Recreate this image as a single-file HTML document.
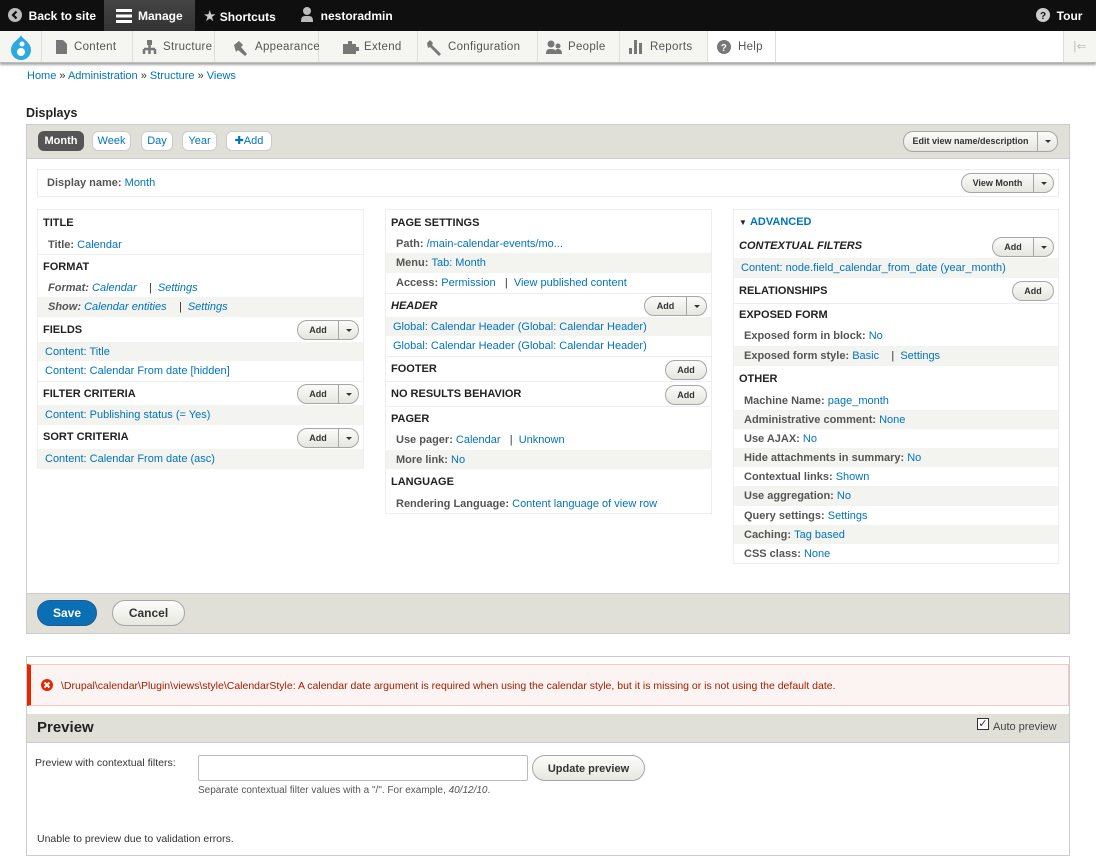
<!DOCTYPE html>
<html><head><meta charset="utf-8"><style>
*{box-sizing:border-box;margin:0;padding:0}
body{width:1096px;height:848px;overflow:hidden;background:#fff;font-family:"Liberation Sans","DejaVu Sans",sans-serif;font-size:11px;color:#333;position:relative}
a,.l{color:#0074bd;text-decoration:none}
.abs{position:absolute}
#top{position:absolute;left:0;top:0;width:1096px;height:31px;background:#0f0f0f;color:#fff;font-weight:bold;font-size:12px}
#top .i{position:absolute;top:1px;height:31px;line-height:31px}
#tray{position:absolute;left:0;top:31px;width:1096px;height:32px;background:#fff;box-shadow:0 2px 2px #aaa;border-bottom:1px solid #bbb}
#tray .t{position:absolute;top:0;height:31px;line-height:33px;background:#f5f5f2;border-right:1px solid #ddd;color:#555;font-size:11.5px;letter-spacing:.3px}
#tray .t svg{position:absolute;top:9px}
.col{position:absolute;border:1px solid #eee;background:#fff}
.r{position:absolute;left:0;right:0;line-height:normal;display:flex;align-items:center;padding-left:10px}
.h{font-weight:bold;color:#222;padding-left:5px;font-size:11px}
.g{background:#f3f3ef}
.sep{border-top:1px solid #eee}
.lb{font-weight:bold;color:#555}
.btn{position:absolute;height:20px;border:1px solid #a6a6a6;border-radius:10px;background:linear-gradient(#fbfbf9,#e6e6e0);font-size:9px;font-weight:bold;color:#333;line-height:18px;text-align:center}
.dd{position:absolute;top:0;bottom:0;right:0;width:20px;border-left:1px solid #a6a6a6}
.dd:after{content:"";position:absolute;left:7px;top:8px;border:3px solid transparent;border-top:3px solid #333}
.tab{position:absolute;top:131px;height:20px;border:1px solid #ccc;border-radius:6px;background:#fff;color:#0074bd;line-height:18px;font-size:11px;text-align:center}
</style></head><body>

<div id="top">
 <div class="i" style="left:8px"><svg width="14" height="14" style="vertical-align:-2px" viewBox="0 0 14 14"><circle cx="7" cy="7" r="7" fill="#bbb"/><path d="M8.5 3.5 5 7l3.5 3.5" stroke="#0f0f0f" stroke-width="2.2" fill="none"/></svg> &nbsp;Back to site</div>
 <div class="i" style="left:104px;width:91px;top:0;background:linear-gradient(#444,#333)"><svg width="16" height="14" style="position:absolute;left:12px;top:9px"><rect y="0" width="16" height="3" fill="#fff"/><rect y="5.5" width="16" height="3" fill="#fff"/><rect y="11" width="16" height="3" fill="#fff"/></svg><span style="position:absolute;left:34px;top:1px">Manage</span></div>
 <div class="i" style="left:203px"><span style="color:#ccc;font-size:15px">★</span> Shortcuts</div>
 <div class="i" style="left:300px"><svg width="14" height="15" style="vertical-align:-2px"><circle cx="7" cy="4" r="4" fill="#bbb"/><path d="M1 15c0-6 2-6 6-6s6 0 6 6z" fill="#bbb"/></svg> &nbsp;nestoradmin</div>
 <div class="i" style="left:1036px"><svg width="14" height="14" style="vertical-align:-2px"><circle cx="7" cy="7" r="7" fill="#ccc"/><text x="7" y="11" font-size="10" text-anchor="middle" fill="#0f0f0f" font-weight="bold" font-family="Liberation Sans">?</text></svg> &nbsp;Tour</div>
</div>

<div id="tray">
 <div class="t" style="left:0;width:42px"><svg width="24" height="26" viewBox="0 0 24 26" style="left:9px;top:3px"><path d="M12 1c1 4 10 7 10 15a10 10 0 0 1-20 0C2 8 11 5 12 1z" fill="#2ba9e0"/><circle cx="12" cy="18" r="4" fill="#fff"/><circle cx="13" cy="10" r="2.5" fill="#fff"/></svg></div>
 <div class="t" style="left:42px;width:91px;padding-left:32px"><svg width="11" height="14" style="left:14px"><path d="M0 0h7l4 4v10H0z" fill="#777"/></svg>Content</div>
 <div class="t" style="left:133px;width:82px;padding-left:30px"><svg width="15" height="14" style="left:9px"><rect x="5" y="0" width="5" height="5" fill="#777"/><path d="M7.5 5v4M2 9h11M2 9v5M7.5 9v5M13 9v5" stroke="#777" stroke-width="2.5" fill="none"/></svg>Structure</div>
 <div class="t" style="left:215px;width:104px;padding-left:40px"><svg width="16" height="16" style="left:17px"><path d="M2 5l5-4 4 4-2 2 6 7-2 2-7-6-2 2z" fill="#777"/></svg>Appearance</div>
 <div class="t" style="left:319px;width:99px;padding-left:45px"><svg width="17" height="14" style="left:24px"><path d="M0 4h5V1h4v3h4v3h3v4h-3v3H0z" fill="#777"/></svg>Extend</div>
 <div class="t" style="left:418px;width:120px;padding-left:30px"><svg width="16" height="16" style="left:8px"><path d="M1 3l3-3 3 3-1 2 9 9-2 2-9-9-2 1z" fill="#777"/></svg>Configuration</div>
 <div class="t" style="left:538px;width:82px;padding-left:30px"><svg width="16" height="14" style="left:8px"><circle cx="5" cy="4" r="3.5" fill="#777"/><path d="M0 14c0-5 2-5 5-5s5 0 5 5z" fill="#777"/><circle cx="12" cy="6" r="2.5" fill="#777"/><path d="M9 14c0-4 1-5 3-5s4 1 4 5z" fill="#777"/></svg>People</div>
 <div class="t" style="left:620px;width:88px;padding-left:30px"><svg width="14" height="14" style="left:9px"><rect x="0" y="8" width="3" height="6" fill="#777"/><rect x="5" y="0" width="3" height="14" fill="#777"/><rect x="10" y="3" width="3" height="11" fill="#777"/></svg>Reports</div>
 <div class="t" style="left:708px;width:68px;padding-left:30px;background:#fff"><svg width="14" height="14" style="left:9px"><circle cx="7" cy="7" r="7" fill="#777"/><text x="7" y="11" font-size="10" text-anchor="middle" fill="#fff" font-weight="bold" font-family="Liberation Sans">?</text></svg>Help</div>
 <div class="t" style="left:1063px;width:33px;border-left:1px solid #ddd;border-right:0;color:#bbb;text-align:center">|⇐</div>
</div>

<div class="abs" style="left:27px;top:70px;font-size:11px"><a>Home</a> » <a>Administration</a> » <a>Structure</a> » <a>Views</a></div>
<div class="abs" style="left:26px;top:106px;font-size:12.5px;font-weight:bold;color:#222">Displays</div>

<div class="abs" style="left:26px;top:124px;width:1044px;height:510px;border:1px solid #ccc;background:#fff">
 <div class="abs" style="left:0;top:0;right:0;height:34px;background:#e0e0d8;border-bottom:1px solid #ccc"></div>
 <div class="abs" style="left:0;bottom:0;right:0;height:40px;background:#e0e0d8;border-top:1px solid #ccc"></div>
</div>
<div class="tab" style="left:38px;width:46px;background:#555;border-color:#555;color:#fff;font-weight:bold">Month</div>
<div class="tab" style="left:92px;width:39px">Week</div>
<div class="tab" style="left:141px;width:32px">Day</div>
<div class="tab" style="left:182px;width:35px">Year</div>
<div class="tab" style="left:226px;width:46px">✚Add</div>
<div class="btn" style="left:903px;top:131px;width:155px;height:21px;padding-right:20px">Edit view name/description<div class="dd"></div></div>

<div class="abs" style="left:37px;top:169px;width:1022px;height:28px;border:1px solid #eee"></div>
<div class="abs" style="left:47px;top:177px"><span class="lb">Display name:</span> <a>Month</a></div>
<div class="btn" style="left:961px;top:173px;width:93px;padding-right:20px">View Month<div class="dd"></div></div>

<div class="col" style="left:37px;top:209px;width:327px;height:260px">
 <div class="r h" style="top:0;height:25px">TITLE</div>
 <div class="r" style="top:25px;height:19px"><span class="lb">Title:</span>&nbsp;<a>Calendar</a></div>
 <div class="r h sep" style="top:44px;height:25px">FORMAT</div>
 <div class="r" style="top:69px;height:18px;font-style:italic"><span class="lb">Format:</span>&nbsp;<a>Calendar</a>&nbsp;&nbsp;&nbsp;&nbsp;|&nbsp;&nbsp;<a>Settings</a></div>
 <div class="r g" style="top:87px;height:20px;font-style:italic"><span class="lb">Show:</span>&nbsp;<a>Calendar entities</a>&nbsp;&nbsp;&nbsp;&nbsp;|&nbsp;&nbsp;<a>Settings</a></div>
 <div class="r h" style="top:107px;height:25px">FIELDS</div>
 <div class="r g" style="top:132px;height:19px;padding-left:7px"><a>Content: Title</a></div>
 <div class="r" style="top:151px;height:20px;padding-left:7px"><a>Content: Calendar From date [hidden]</a></div>
 <div class="r h sep" style="top:171px;height:24px">FILTER CRITERIA</div>
 <div class="r g" style="top:195px;height:20px;padding-left:7px"><a>Content: Publishing status (= Yes)</a></div>
 <div class="r h" style="top:215px;height:24px">SORT CRITERIA</div>
 <div class="r g" style="top:239px;height:20px;padding-left:7px"><a>Content: Calendar From date (asc)</a></div>
</div>
<div class="btn" style="left:297px;top:320px;width:62px;padding-right:20px">Add<div class="dd"></div></div>
<div class="btn" style="left:297px;top:384px;width:62px;padding-right:20px">Add<div class="dd"></div></div>
<div class="btn" style="left:297px;top:428px;width:62px;padding-right:20px">Add<div class="dd"></div></div>

<div class="col" style="left:385px;top:209px;width:327px;height:305px">
 <div class="r h" style="top:0;height:25px">PAGE SETTINGS</div>
 <div class="r" style="top:25px;height:18px"><span class="lb">Path:</span>&nbsp;<a>/main-calendar-events/mo...</a></div>
 <div class="r g" style="top:43px;height:20px"><span class="lb">Menu:</span>&nbsp;<a>Tab: Month</a></div>
 <div class="r" style="top:63px;height:20px"><span class="lb">Access:</span>&nbsp;<a>Permission</a>&nbsp;&nbsp;&nbsp;|&nbsp;&nbsp;<a>View published content</a></div>
 <div class="r h sep" style="top:83px;height:24px;font-style:italic">HEADER</div>
 <div class="r g" style="top:107px;height:19px;padding-left:7px"><a>Global: Calendar Header (Global: Calendar Header)</a></div>
 <div class="r" style="top:126px;height:20px;padding-left:7px"><a>Global: Calendar Header (Global: Calendar Header)</a></div>
 <div class="r h sep" style="top:146px;height:25px">FOOTER</div>
 <div class="r h sep" style="top:171px;height:25px">NO RESULTS BEHAVIOR</div>
 <div class="r h sep" style="top:196px;height:24px">PAGER</div>
 <div class="r" style="top:220px;height:20px"><span class="lb">Use pager:</span>&nbsp;<a>Calendar</a>&nbsp;&nbsp;&nbsp;|&nbsp;&nbsp;<a>Unknown</a></div>
 <div class="r g" style="top:240px;height:19px"><span class="lb">More link:</span>&nbsp;<a>No</a></div>
 <div class="r h" style="top:259px;height:25px">LANGUAGE</div>
 <div class="r" style="top:284px;height:20px"><span class="lb">Rendering Language:</span>&nbsp;<a>Content language of view row</a></div>
</div>
<div class="btn" style="left:644px;top:296px;width:63px;padding-right:20px">Add<div class="dd"></div></div>
<div class="btn" style="left:665px;top:360px;width:42px">Add</div>
<div class="btn" style="left:665px;top:385px;width:42px">Add</div>

<div class="col" style="left:733px;top:209px;width:326px;height:355px">
 <div class="r h" style="top:0;height:24px;color:#0074bd"><span style="font-size:8px;color:#222">▼</span>&nbsp;ADVANCED</div>
 <div class="r h" style="top:24px;height:24px;font-style:italic">CONTEXTUAL FILTERS</div>
 <div class="r g" style="top:48px;height:20px;padding-left:7px"><a>Content: node.field_calendar_from_date (year_month)</a></div>
 <div class="r h" style="top:68px;height:25px">RELATIONSHIPS</div>
 <div class="r h sep" style="top:93px;height:23px">EXPOSED FORM</div>
 <div class="r" style="top:116px;height:20px"><span class="lb">Exposed form in block:</span>&nbsp;<a>No</a></div>
 <div class="r g" style="top:136px;height:20px"><span class="lb">Exposed form style:</span>&nbsp;<a>Basic</a>&nbsp;&nbsp;&nbsp;&nbsp;|&nbsp;&nbsp;<a>Settings</a></div>
 <div class="r h" style="top:156px;height:25px">OTHER</div>
 <div class="r" style="top:181px;height:19px"><span class="lb">Machine Name:</span>&nbsp;<a>page_month</a></div>
 <div class="r g" style="top:200px;height:19px"><span class="lb">Administrative comment:</span>&nbsp;<a>None</a></div>
 <div class="r" style="top:219px;height:19px"><span class="lb">Use AJAX:</span>&nbsp;<a>No</a></div>
 <div class="r g" style="top:238px;height:19px"><span class="lb">Hide attachments in summary:</span>&nbsp;<a>No</a></div>
 <div class="r" style="top:257px;height:19px"><span class="lb">Contextual links:</span>&nbsp;<a>Shown</a></div>
 <div class="r g" style="top:276px;height:20px"><span class="lb">Use aggregation:</span>&nbsp;<a>No</a></div>
 <div class="r" style="top:296px;height:19px"><span class="lb">Query settings:</span>&nbsp;<a>Settings</a></div>
 <div class="r g" style="top:315px;height:19px"><span class="lb">Caching:</span>&nbsp;<a>Tag based</a></div>
 <div class="r" style="top:334px;height:19px"><span class="lb">CSS class:</span>&nbsp;<a>None</a></div>
</div>
<div class="btn" style="left:992px;top:237px;width:62px;padding-right:20px">Add<div class="dd"></div></div>
<div class="btn" style="left:1012px;top:281px;width:42px">Add</div>

<div class="abs" style="left:37px;top:600px;width:60px;height:26px;border-radius:13px;background:#0a6fb5;border:1px solid #1e5c90;color:#fff;font-weight:bold;font-size:12px;text-align:center;line-height:24px">Save</div>
<div class="abs" style="left:112px;top:600px;width:73px;height:26px;border-radius:13px;background:linear-gradient(#fcfcfa,#e8e8e2);border:1px solid #a6a6a6;color:#333;font-weight:bold;font-size:12px;text-align:center;line-height:24px">Cancel</div>

<div class="abs" style="left:26px;top:656px;width:1044px;height:200px;border:1px solid #ccc;background:#fff"></div>
<div class="abs" style="left:27px;top:664px;width:1042px;height:42px;background:#fcf4f2;border:1px solid #f4c6c0;border-left:4px solid #e62600;color:#a51b00;font-size:10.5px;line-height:42px;padding-left:30px">\Drupal\calendar\Plugin\views\style\CalendarStyle: A calendar date argument is required when using the calendar style, but it is missing or is not using the default date.</div>
<svg class="abs" style="left:41px;top:679px" width="12" height="12"><circle cx="6" cy="6" r="6" fill="#e62600"/><path d="M3.5 3.5l5 5M8.5 3.5l-5 5" stroke="#fff" stroke-width="2"/></svg>
<div class="abs" style="left:27px;top:714px;width:1042px;height:29px;background:#e0e0d8;border-bottom:1px solid #ccc"></div>
<div class="abs" style="left:37px;top:719px;font-size:15px;font-weight:bold;color:#222">Preview</div>
<div class="abs" style="left:977px;top:718px;width:12px;height:12px;border:1px solid #333;background:#fff;font-size:11px;line-height:10px;text-align:center">✓</div>
<div class="abs" style="left:993px;top:721px;font-size:11px;color:#444">Auto preview</div>
<div class="abs" style="left:35px;top:757px;font-size:10.5px;color:#333">Preview with contextual filters:</div>
<div class="abs" style="left:198px;top:755px;width:330px;height:26px;border:1px solid #bbb;border-radius:2px;background:#fff"></div>
<div class="abs" style="left:532px;top:755px;width:113px;height:26px;border-radius:13px;background:linear-gradient(#fcfcfa,#e8e8e2);border:1px solid #a6a6a6;color:#333;font-weight:bold;font-size:11px;text-align:center;line-height:26px">Update preview</div>
<div class="abs" style="left:198px;top:785px;font-size:10px;color:#555">Separate contextual filter values with a "/". For example, <i>40/12/10</i>.</div>
<div class="abs" style="left:37px;top:833px;font-size:10.5px;color:#333">Unable to preview due to validation errors.</div>
</body></html>
